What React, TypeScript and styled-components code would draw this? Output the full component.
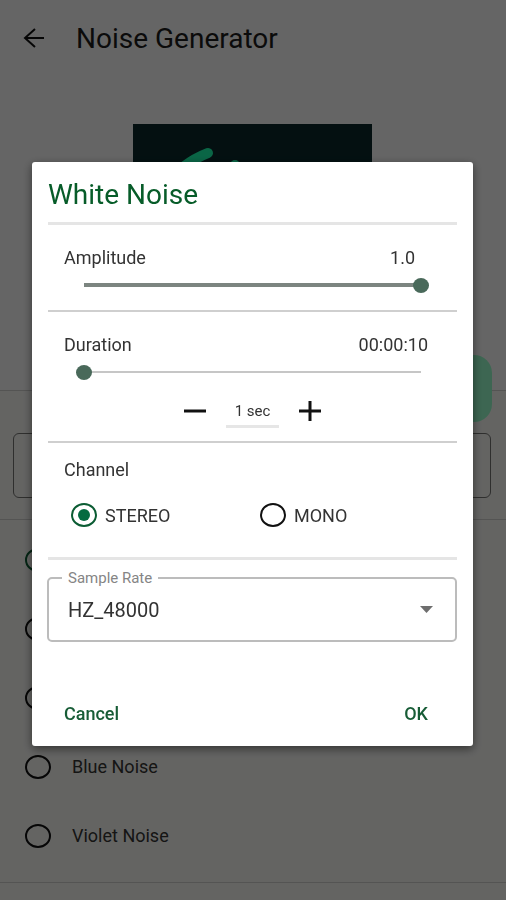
import React, { useState } from "react";
import styled, { createGlobalStyle, css } from "styled-components";

const GlobalStyle = createGlobalStyle`
  * { box-sizing: border-box; }
  body {
    margin: 0;
    background: #fdfdfd;
    color: #1c1c1c;
    font-family: Roboto, "Liberation Sans", sans-serif;
    font-size: 18px;
  }
  button, input, select { font: inherit; color: inherit; }
`;

const Page = styled.div`
  position: relative;
  min-height: 100vh;
  display: flex;
  flex-direction: column;
  overflow: hidden;
`;

const TopBar = styled.header`
  display: flex;
  align-items: center;
  gap: 28px;
  height: 78px;
  padding: 0 22px;
`;

const PageTitle = styled.h1`
  margin: 0;
  font-size: 28px;
  line-height: 36px;
  font-weight: 400;
`;

const IconButton = styled.button`
  display: grid;
  place-items: center;
  padding: 0;
  border: 0;
  background: none;
  svg { display: block; }
`;

const Hero = styled.div`
  height: 313px;
  padding: 46px 2px 0 0;
  display: flex;
  justify-content: center;
  align-items: flex-start;
  border-bottom: 1px solid #d2d2d0;
`;

const PlayFab = styled.button`
  position: absolute;
  top: 355px;
  right: 14px;
  width: 72px;
  height: 67px;
  border: 0;
  border-radius: 18px;
  background: #98ffcc;
`;

const Lower = styled.section`
  flex: 1;
  background: #fafaf6;
`;

const NameArea = styled.div`
  padding: 42px 15px 21px 13px;
  border-bottom: 1px solid #d2d2d0;
`;

const NameInput = styled.input`
  display: block;
  width: 100%;
  height: 65px;
  padding: 0 20px;
  border: 1px solid #757573;
  border-radius: 6px;
  background: none;
`;

const NoiseList = styled.div`
  padding: 5px 25px 12px;
  border-bottom: 1px solid #d2d2d0;
`;

const RadioLabel = styled.label<{ $list?: boolean }>`
  display: flex;
  align-items: center;
  gap: ${(p) => (p.$list ? "21px" : "8px")};
  ${(p) => p.$list && css`
    height: 69px;
    color: #363634;
  `}
`;

const Radio = styled.input`
  appearance: none;
  display: grid;
  place-items: center;
  flex: none;
  width: 26px;
  height: 24px;
  margin: 0;
  border: 2px solid #111;
  border-radius: 50%;
  &:checked { border-color: #0b5c33; }
  &:checked::after {
    content: "";
    width: 12px;
    height: 12px;
    border-radius: 50%;
    background: #056b41;
  }
`;

const Overlay = styled.div`
  position: fixed;
  inset: 0;
  display: flex;
  align-items: center;
  padding: 8px 33px 0 32px;
  background: rgba(0, 0, 0, 0.6);
`;

const Dialog = styled.form`
  width: 100%;
  padding: 0 16px 15px;
  background: #fff;
  border-radius: 3px;
  box-shadow: 0 3px 10px rgba(0, 0, 0, 0.5);
`;

const DialogTitle = styled.h2`
  margin: 0;
  padding: 15px 0 9px;
  font-size: 28px;
  line-height: 36px;
  font-weight: 400;
  color: #075c29;
`;

const Divider = styled.hr<{ $thick?: boolean }>`
  margin: 0;
  border: 0;
  height: ${(p) => (p.$thick ? "3px" : "2px")};
  background: ${(p) => (p.$thick ? "#e5e5e5" : "#cfcfcf")};
`;

const Section = styled.div`
  padding: 23px 16px 15px;
  color: #333;
`;

const ValueRow = styled.div<{ $inset?: boolean }>`
  display: flex;
  justify-content: space-between;
  line-height: 20px;
  padding-right: ${(p) => (p.$inset ? "26px" : "13px")};
`;

const Slider = styled.input<{ $filled?: boolean }>`
  appearance: none;
  display: block;
  width: calc(100% - 24px);
  height: 20px;
  margin: 7px 12px 0;
  background: linear-gradient(${(p) => (p.$filled ? "#7c8580, #7c8580" : "#c6c6c6, #c6c6c6")})
    center / calc(100% - 16px) ${(p) => (p.$filled ? "4px" : "2px")} no-repeat;
  &::-webkit-slider-thumb {
    appearance: none;
    width: 16px;
    height: 15px;
    border-radius: 50%;
    background: #49695a;
  }
`;

const Stepper = styled.div`
  display: flex;
  justify-content: center;
  align-items: center;
  gap: 20px;
  margin: 12px 0 -2px;
`;

const StepInput = styled.input`
  width: 53px;
  height: 34px;
  padding: 3px 0 0;
  border: 0;
  border-bottom: 3px solid #e6e6e6;
  background: none;
  font-size: 15px;
  text-align: center;
`;

const ChannelGroup = styled.fieldset`
  margin: 0;
  border: 0;
  padding: 17px 8px 30px 16px;
  color: #333;
`;

const ChannelLegend = styled.legend`
  float: left;
  width: 100%;
  padding: 0;
  line-height: 20px;
`;

const Choices = styled.div`
  clear: both;
  display: grid;
  grid-template-columns: 1fr 1fr;
  padding: 23px 0 0 7px;
`;

const SelectField = styled.div`
  position: relative;
  margin: 17px 0 0 -1px;
`;

const SelectLabel = styled.label`
  position: absolute;
  top: -8px;
  left: 15px;
  padding: 0 6px;
  background: #fff;
  color: #858585;
  font-size: 15px;
  line-height: 18px;
`;

const Select = styled.select`
  appearance: none;
  display: block;
  width: 100%;
  height: 65px;
  padding: 0 19px;
  border: 2px solid #bcbcbc;
  border-radius: 5px;
  background: #fff;
  color: #333;
  font-size: 20px;
`;

const SelectArrow = styled.svg`
  position: absolute;
  right: 24px;
  top: 29px;
  pointer-events: none;
`;

const Actions = styled.div`
  display: flex;
  justify-content: space-between;
  margin-top: 53px;
  padding: 0 21px 0 8px;
`;

const TextButton = styled.button`
  height: 36px;
  padding: 0 8px;
  border: 0;
  background: none;
  color: #175c36;
  font-size: 18px;
  font-weight: 500;
`;

const noises = [
  { name: "White", caption: "" },
  { name: "Pink", caption: "" },
  { name: "Brown", caption: "" },
  { name: "Blue", caption: "Blue Noise" },
  { name: "Violet", caption: "Violet Noise" },
];

export default function App() {
  const [amplitude, setAmplitude] = useState(1);
  const [duration, setDuration] = useState(10);
  const [step, setStep] = useState(1);
  const clock = [Math.floor(duration / 3600), Math.floor(duration / 60) % 60, duration % 60]
    .map((n) => String(n).padStart(2, "0"))
    .join(":");

  return (
    <>
      <GlobalStyle />
      <Page>
        <TopBar>
          <IconButton aria-label="Back">
            <svg width="26" height="24" viewBox="0 0 26 24" fill="none" stroke="#111" strokeWidth="2">
              <path d="M22 11H3M13 2L3 11l10 9" />
            </svg>
          </IconButton>
          <PageTitle>Noise Generator</PageTitle>
        </TopBar>
        <Hero>
          <svg width="239" height="200" viewBox="0 0 239 200" aria-hidden="true">
            <rect width="239" height="200" fill="#0a2a2c" />
            <path d="M50 43Q62 34 75 29" fill="none" stroke="#1bffb0" strokeWidth="10" strokeLinecap="round" />
            <circle cx="102" cy="41" r="5" fill="#1bffb0" />
          </svg>
        </Hero>
        <Lower>
          <NameArea>
            <NameInput aria-label="File name" />
          </NameArea>
          <NoiseList>
            {noises.map(({ name, caption }, i) => (
              <RadioLabel key={name} $list>
                <Radio type="radio" name="noise" aria-label={`${name} Noise`} defaultChecked={i === 0} />
                {caption}
              </RadioLabel>
            ))}
          </NoiseList>
        </Lower>
        <PlayFab aria-label="Play" />
      </Page>

      <Overlay>
        <Dialog role="dialog" aria-labelledby="dialog-title" onSubmit={(e) => e.preventDefault()}>
          <DialogTitle id="dialog-title">White Noise</DialogTitle>
          <Divider $thick />
          <Section>
            <ValueRow $inset>
              <label htmlFor="amplitude">Amplitude</label>
              <output>{amplitude.toFixed(1)}</output>
            </ValueRow>
            <Slider
              id="amplitude" type="range" min={0} max={1} step={0.1} $filled
              value={amplitude} onChange={(e) => setAmplitude(Number(e.target.value))}
            />
          </Section>
          <Divider />
          <Section>
            <ValueRow>
              <label htmlFor="duration">Duration</label>
              <output>{clock}</output>
            </ValueRow>
            <Slider
              id="duration" type="range" min={10} max={3600}
              value={duration} onChange={(e) => setDuration(Number(e.target.value))}
            />
            <Stepper>
              <IconButton type="button" aria-label="Decrease" onClick={() => setStep(Math.max(1, step - 1))}>
                <svg width="22" height="22" viewBox="0 0 22 22" stroke="#111" strokeWidth="3">
                  <path d="M0 11H22" />
                </svg>
              </IconButton>
              <StepInput aria-label="Step" value={`${step} sec`} readOnly />
              <IconButton type="button" aria-label="Increase" onClick={() => setStep(step + 1)}>
                <svg width="22" height="22" viewBox="0 0 22 22" stroke="#111" strokeWidth="3">
                  <path d="M0 11H22M11 1V21" />
                </svg>
              </IconButton>
            </Stepper>
          </Section>
          <Divider />
          <ChannelGroup>
            <ChannelLegend>Channel</ChannelLegend>
            <Choices>
              <RadioLabel><Radio type="radio" name="channel" defaultChecked />STEREO</RadioLabel>
              <RadioLabel><Radio type="radio" name="channel" />MONO</RadioLabel>
            </Choices>
          </ChannelGroup>
          <Divider $thick />
          <SelectField>
            <Select id="rate" defaultValue="HZ_48000">
              <option>HZ_48000</option>
            </Select>
            <SelectLabel htmlFor="rate">Sample Rate</SelectLabel>
            <SelectArrow width="13" height="7" viewBox="0 0 13 7" aria-hidden="true">
              <path d="M0 0H13L6.500 7Z" fill="#6e6e6e" />
            </SelectArrow>
          </SelectField>
          <Actions>
            <TextButton type="button">Cancel</TextButton>
            <TextButton type="submit">OK</TextButton>
          </Actions>
        </Dialog>
      </Overlay>
    </>
  );
}
